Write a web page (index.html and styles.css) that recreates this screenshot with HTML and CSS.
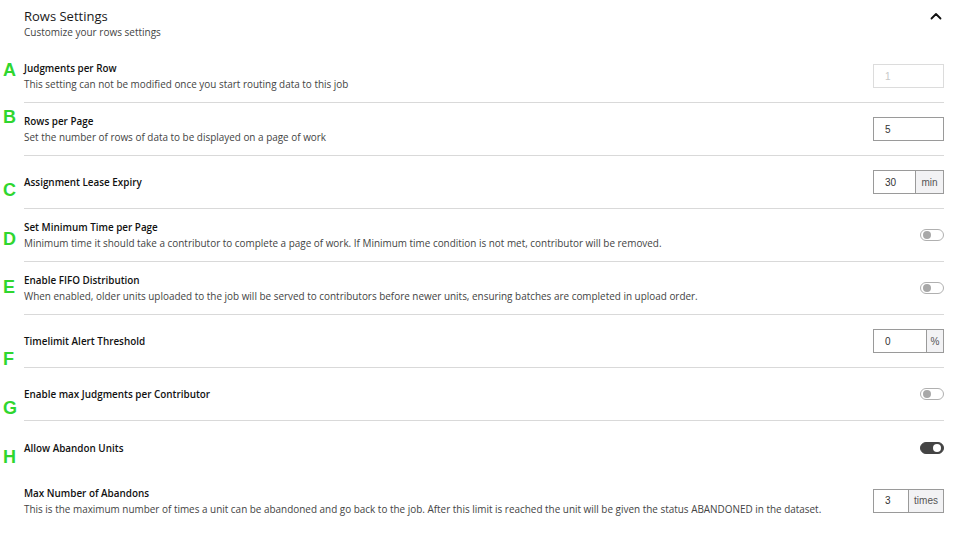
FILE: index.html
```html
<!DOCTYPE html>
<html>
<head>
<meta charset="utf-8">
<link rel="stylesheet" href="styles.css">
</head>
<body>
<div class="page">
  <div class="panel">
    <div class="header">
      <div class="header-text">
        <div class="h-title">Rows Settings</div>
        <div class="h-sub">Customize your rows settings</div>
      </div>
      <svg class="chev" width="12" height="8" viewBox="0 0 12 8"><path d="M1.5 6.5 L6 2 L10.5 6.5" fill="none" stroke="#111" stroke-width="1.8" stroke-linecap="round" stroke-linejoin="round"/></svg>
    </div>

    <div class="row">
      <div class="text">
        <div class="title">Judgments per Row</div>
        <div class="desc">This setting can not be modified once you start routing data to this job</div>
      </div>
      <div class="input disabled"><span class="val">1</span></div>
    </div>

    <div class="row">
      <div class="text">
        <div class="title">Rows per Page</div>
        <div class="desc">Set the number of rows of data to be displayed on a page of work</div>
      </div>
      <div class="input"><span class="val">5</span></div>
    </div>

    <div class="row">
      <div class="text">
        <div class="title">Assignment Lease Expiry</div>
      </div>
      <div class="group">
        <div class="num num-min"><span class="val">30</span></div>
        <div class="addon">min</div>
      </div>
    </div>

    <div class="row">
      <div class="text">
        <div class="title">Set Minimum Time per Page</div>
        <div class="desc">Minimum time it should take a contributor to complete a page of work. If Minimum time condition is not met, contributor will be removed.</div>
      </div>
      <div class="toggle"><span class="knob"></span></div>
    </div>

    <div class="row">
      <div class="text">
        <div class="title">Enable FIFO Distribution</div>
        <div class="desc">When enabled, older units uploaded to the job will be served to contributors before newer units, ensuring batches are completed in upload order.</div>
      </div>
      <div class="toggle"><span class="knob"></span></div>
    </div>

    <div class="row">
      <div class="text">
        <div class="title">Timelimit Alert Threshold</div>
      </div>
      <div class="group">
        <div class="num num-pct"><span class="val">0</span></div>
        <div class="addon">%</div>
      </div>
    </div>

    <div class="row">
      <div class="text">
        <div class="title">Enable max Judgments per Contributor</div>
      </div>
      <div class="toggle"><span class="knob"></span></div>
    </div>

    <div class="row no-border">
      <div class="text">
        <div class="title">Allow Abandon Units</div>
      </div>
      <div class="toggle on"><span class="knob"></span></div>
    </div>

    <div class="row no-border">
      <div class="text">
        <div class="title">Max Number of Abandons</div>
        <div class="desc">This is the maximum number of times a unit can be abandoned and go back to the job. After this limit is reached the unit will be given the status ABANDONED in the dataset.</div>
      </div>
      <div class="group">
        <div class="num num-times"><span class="val">3</span></div>
        <div class="addon">times</div>
      </div>
    </div>
  </div>

  <div class="mark mark-a">A</div>
  <div class="mark mark-b">B</div>
  <div class="mark mark-c">C</div>
  <div class="mark mark-d">D</div>
  <div class="mark mark-e">E</div>
  <div class="mark mark-f">F</div>
  <div class="mark mark-g">G</div>
  <div class="mark mark-h">H</div>
</div>
</body>
</html>
```

FILE: styles.css
```css
* { box-sizing: border-box; }
html, body { margin: 0; padding: 0; background: #fff; }
body { font-family: "Open Sans", "DejaVu Sans", sans-serif; color: #111; }

.page { position: relative; width: 960px; height: 538px; overflow: hidden; }

.panel { padding: 0 16px 0 24px; }

.header {
  height: 50px;
  display: flex;
  justify-content: space-between;
  align-items: flex-start;
  padding-top: 6px;
}
.h-title { font-size: 13px; line-height: 20px; color: #1a1a1a; }
.h-sub { font-size: 10px; line-height: 12px; color: #444; }
.chev { margin-top: 6px; margin-right: 2px; }

.row {
  height: 53px;
  display: flex;
  align-items: center;
  justify-content: space-between;
  border-bottom: 1px solid #d9d9d9;
}
.row.no-border { border-bottom: none; }

.text { display: flex; flex-direction: column; }
.title { font-size: 9.9px; font-weight: 600; line-height: 16px; color: #111; }
.desc { font-size: 9.93px; line-height: 16px; color: #444; }

.input {
  width: 71px; height: 24px;
  border: 1px solid #9a9a9a;
  display: flex; align-items: center;
  padding-left: 11px;
  font-family: "Liberation Sans", Arial, sans-serif;
  font-size: 10px; color: #333;
}
.input.disabled { border-color: #dcdcdc; color: #c8c8c8; }

.group {
  width: 71px; height: 24px;
  border: 1px solid #9a9a9a;
  display: flex;
  font-family: "Liberation Sans", Arial, sans-serif;
  font-size: 10px; color: #333;
}
.num { display: flex; align-items: center; padding-left: 11px; border-right: 1px solid #9a9a9a; }
.num-min { width: 42px; }
.num-pct { width: 53px; }
.num-times { width: 35px; }
.addon {
  flex: 1;
  background: #f2f2f4;
  display: flex; align-items: center; justify-content: center;
  color: #555;
}

.toggle {
  width: 24px; height: 12px;
  border: 1px solid #b0b0b0;
  border-radius: 6px;
  position: relative;
  background: #fff;
}
.toggle .knob {
  position: absolute;
  left: 2px; top: 1px;
  width: 8px; height: 8px;
  border-radius: 50%;
  background: #a8a8a8;
}
.toggle.on { background: #444; border-color: #444; }
.toggle.on .knob { left: auto; right: 2px; background: #fff; }

.mark {
  position: absolute;
  left: 3px;
  font-family: "Liberation Sans", Arial, sans-serif;
  font-weight: bold;
  font-size: 18px;
  line-height: 18px;
  color: #2fd62f;
}
.mark-a { top: 61px; }
.mark-b { top: 108px; }
.mark-c { top: 181px; }
.mark-d { top: 230px; }
.mark-e { top: 278px; }
.mark-f { top: 350px; }
.mark-g { top: 399px; }
.mark-h { top: 448px; }
```
